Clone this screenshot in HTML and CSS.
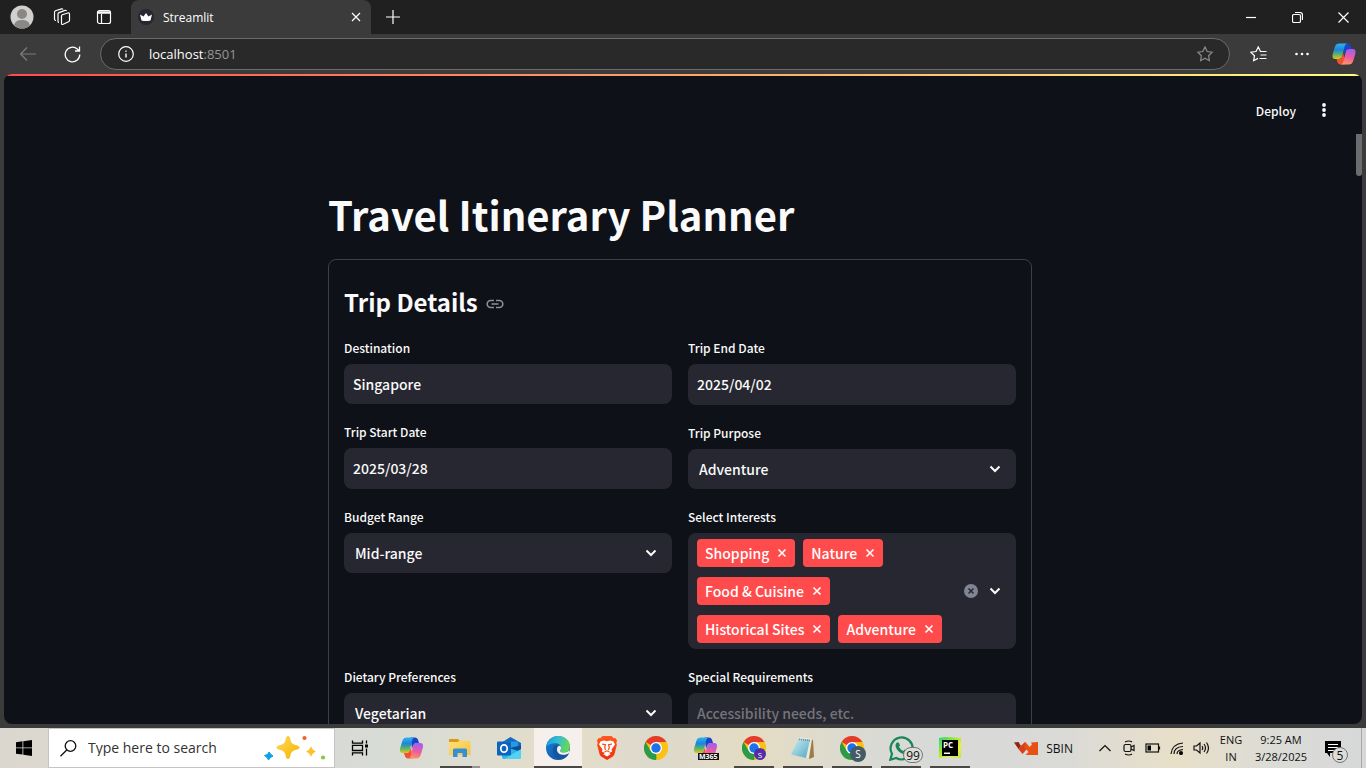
FILE: index.html
```html
<!DOCTYPE html>
<html lang="en">
<head>
<meta charset="utf-8">
<title>Streamlit</title>
<link rel="stylesheet" href="styles.css">
</head>
<body>
<svg class="sprite" aria-hidden="true">
  <defs>
    <linearGradient id="cpA" x1="0" y1="0" x2="0" y2="1"><stop offset="0" stop-color="#2cb5ec"/><stop offset=".4" stop-color="#1e84dc"/><stop offset=".7" stop-color="#55b56c"/><stop offset="1" stop-color="#ecc310"/></linearGradient>
    <linearGradient id="cpB" x1="0.4" y1="0" x2="0.2" y2="1"><stop offset="0" stop-color="#a45df0"/><stop offset=".5" stop-color="#ee5ba0"/><stop offset="1" stop-color="#ff9a5c"/></linearGradient>
    <linearGradient id="edA" x1="0" y1="0" x2="1" y2="0.3"><stop offset="0" stop-color="#1b8fd8"/><stop offset=".5" stop-color="#35bcd5"/><stop offset="1" stop-color="#62d957"/></linearGradient>
    <linearGradient id="edB" x1="0" y1="0" x2="1" y2="1"><stop offset="0" stop-color="#1783d6"/><stop offset="1" stop-color="#0c4a94"/></linearGradient>
    <linearGradient id="fold" x1="0" y1="0" x2="1" y2="1"><stop offset="0" stop-color="#ffe07a"/><stop offset="1" stop-color="#f6c143"/></linearGradient>
    <linearGradient id="star" x1="0" y1="0" x2="1" y2="1"><stop offset="0" stop-color="#ffd95a"/><stop offset="1" stop-color="#f5b400"/></linearGradient>
    <linearGradient id="pad" x1="0" y1="0" x2="1" y2="1"><stop offset="0" stop-color="#d3f0f5"/><stop offset="1" stop-color="#4fa9c3"/></linearGradient>
    <linearGradient id="pyc" x1="0" y1="0" x2="1" y2="1"><stop offset="0" stop-color="#21d789"/><stop offset=".35" stop-color="#8be633"/><stop offset=".7" stop-color="#f5ee35"/><stop offset="1" stop-color="#b9e83b"/></linearGradient>
    <linearGradient id="bra" x1="0" y1="0" x2="0" y2="1"><stop offset="0" stop-color="#ff5a22"/><stop offset="1" stop-color="#f12c0a"/></linearGradient>
    <symbol id="copilot" viewBox="0 0 24 24">
      <path d="M11 1.500h4.500q2.200 0 2.900 2L19.600 7H17q-2.500 0-3.300 2.500L12.500 13z" fill="#1a45c8"/>
      <path d="M13 22.500H8.500q-2.200 0-2.900-2L4.400 17H7q2.500 0 3.300-2.500L11.500 11z" fill="#ee5135"/>
      <path d="M7.500 1.500H15c-1.500.6-2 1.700-2.500 3.400L10.300 14c-.7 2.200-1.800 3-3.800 3H3.300C.8 17 0 15.200.6 12.500L2.800 5C3.600 2.600 5 1.500 7.500 1.500z" fill="url(#cpA)"/>
      <path d="M16.500 22.500H9c1.400-.6 2-1.700 2.500-3.400L13.700 10c.7-2.200 1.800-3 3.800-3h3.200c2.500 0 3.300 1.800 2.700 4.500L21.200 19c-.8 2.400-2.200 3.500-4.700 3.500z" fill="url(#cpB)"/>
    </symbol>
    <symbol id="chrome" viewBox="0 0 24 24">
      <circle cx="12" cy="12" r="12" fill="#fbc116"/>
      <path d="M12 12L1.600 6A12 12 0 0 1 22.400 6z" fill="#e33b2e"/>
      <path d="M12 12L12.500 24A12 12 0 0 1 1.600 6L6.800 15z" fill="#2b9b47"/>
      <path d="M17.200 15L12 24A12 12 0 0 0 22.400 6H12z" fill="#fbc116"/>
      <circle cx="12" cy="12" r="6" fill="#fff"/><circle cx="12" cy="12" r="4.700" fill="#1a73e8"/>
    </symbol>
    <symbol id="chev" viewBox="0 0 12 12"><path d="M1.500 3.500L6 8l4.500-4.500" fill="none" stroke="#fafafa" stroke-width="2"/></symbol>
    <symbol id="cross" viewBox="0 0 10 10"><path d="M1.500 1.500l7 7m0-7l-7 7" fill="none" stroke="#fff" stroke-width="1.600"/></symbol>
  </defs>
</svg>

<header class="tabbar">
  <button class="tool w44" aria-label="Profile"><svg width="24" height="24" viewBox="0 0 24 24"><circle cx="12" cy="12" r="11.500" fill="#d2d0ce"/><circle cx="12" cy="9" r="5" fill="#8b8784"/><path d="M4 20.300c1-4 4-5.300 8-5.300s7 1.300 8 5.300a11.500 11.500 0 0 1-16 0z" fill="#8b8784"/></svg></button>
  <button class="tool w36" aria-label="Workspaces"><svg class="line" width="18" height="18" viewBox="0 0 18 18"><path d="M9.300 6.800L14.800 5q1.700-.4 1.700 1.200v6q0 1.200-1 1.600l-5.300 2.500q-1.700.7-1.700-1V8q0-.9.800-1.200zM6 14.500q-1 0-1-1.300V6q0-1 1-1.400l6-2.200q1-.3 1.500.6M3 12.500q-1.500 0-1.500-1.500V4.500q0-1.300 1-1.700L8.500.900q1-.3 1.500.6"/></svg></button>
  <button class="tool w48" aria-label="Tab actions"><svg class="line" width="16" height="16" viewBox="0 0 16 16"><rect x="1.500" y="1.500" width="13" height="13" rx="2"/><path d="M1.500 3.500h13" stroke-width="2.500"/><path d="M5.500 5v9"/></svg></button>
  <div class="tab">
    <svg width="16" height="16" viewBox="0 0 16 16"><circle cx="8" cy="8" r="8" fill="#262730"/><path d="M2 5.500l3.500 2L8 4l2.500 3.500 3.500-2-1.500 6q-4.500 1-9 0z" fill="#fff"/></svg>
    <span class="tab-name">Streamlit</span>
    <button class="plain" aria-label="Close tab"><svg class="line" width="10" height="10" viewBox="0 0 10 10"><path d="M1 1l8 8m0-8L1 9"/></svg></button>
  </div>
  <button class="tool w44" aria-label="New tab"><svg class="line" width="14" height="14" viewBox="0 0 14 14"><path d="M7 0v14M0 7h14"/></svg></button>
  <div class="window-controls">
    <button class="tool w46" aria-label="Minimize"><svg class="line" width="10" height="10" viewBox="0 0 10 10"><path d="M0 5.500h10"/></svg></button>
    <button class="tool w46" aria-label="Restore"><svg class="line" width="11" height="11" viewBox="0 0 11 11"><rect x=".5" y="2.500" width="8" height="8" rx="1.500"/><path d="M3 .5h5q2.500 0 2.500 2.500v5"/></svg></button>
    <button class="tool w46" aria-label="Close"><svg class="line" width="11" height="11" viewBox="0 0 11 11"><path d="M.5.500l10 10m0-10l-10 10"/></svg></button>
  </div>
</header>

<nav class="toolbar">
  <button class="tool w44 dim" aria-label="Back"><svg class="line" width="16" height="14" viewBox="0 0 16 14"><path d="M16 7H1m6-6.500L.7 7 7 13.500"/></svg></button>
  <button class="tool w44" aria-label="Refresh"><svg class="line" width="17" height="17" viewBox="0 0 17 17"><path d="M15.800 8.500a7.300 7.300 0 1 1-2.300-5.300L15.500 5M15.500.500V5H11" stroke-width="1.300"/></svg></button>
  <form class="address">
    <svg class="line" width="16" height="16" viewBox="0 0 16 16"><circle cx="8" cy="8" r="7.300"/><path d="M8 7.500v4M8 4.500v1.300" stroke-width="1.400"/></svg>
    <a class="url" href="#">localhost<span>:8501</span></a>
    <button type="button" class="plain star" aria-label="Add to favorites"><svg class="line" width="16" height="16" viewBox="0 0 16 16"><path d="M8 .9l2.200 4.600 5 .7-3.600 3.500.8 5L8 12.300l-4.400 2.400.8-5L.8 6.200l5-.7z"/></svg></button>
  </form>
  <button class="tool w44" aria-label="Favorites"><svg class="line" width="17" height="16" viewBox="0 0 17 16"><path d="M10.500 5.500L8.300.900 6 5.500l-5.200.7 3.700 3.500-.9 5 4.400-2.300M10 5.500h6.500M10.500 9h6M9.500 12.500h7"/></svg></button>
  <button class="tool w44" aria-label="More"><svg width="16" height="4" viewBox="0 0 16 4" fill="#fff"><circle cx="2.500" cy="2" r="1.300"/><circle cx="8" cy="2" r="1.300"/><circle cx="13.500" cy="2" r="1.300"/></svg></button>
  <button class="tool w40" aria-label="Copilot"><svg width="24" height="24"><use href="#copilot"/></svg></button>
</nav>

<div class="frame">
  <main class="app">
    <div class="decoration"></div>
    <div class="app-header">
      <button class="plain deploy">Deploy</button>
      <button class="plain" aria-label="Menu"><svg width="16" height="16" viewBox="0 0 16 16" fill="#fafafa"><circle cx="8" cy="3" r="1.900"/><circle cx="8" cy="8" r="1.900"/><circle cx="8" cy="13" r="1.900"/></svg></button>
    </div>
    <div class="scroll-thumb"></div>
    <div class="content">
      <h1>Travel Itinerary Planner</h1>
      <form class="card">
        <h3>Trip Details <a href="#" aria-label="Link to Trip Details"><svg width="18" height="10" viewBox="0 0 18 10" fill="none" stroke="#8d9096" stroke-width="1.600"><path d="M8 1.500H4.700a3.500 3.500 0 0 0 0 7H8M10 1.500h3.300a3.500 3.500 0 0 1 0 7H10M5.500 5h7"/></svg></a></h3>
        <div class="grid">
          <div class="column">
            <div class="field"><label for="dest">Destination</label><input id="dest" type="text" value="Singapore"></div>
            <div class="field"><label for="start">Trip Start Date</label><input id="start" class="date" type="text" value="2025/03/28"></div>
          </div>
          <div class="column">
            <div class="field"><label for="end">Trip End Date</label><input id="end" class="date" type="text" value="2025/04/02"></div>
            <div class="field"><label for="purpose">Trip Purpose</label><div class="select"><select id="purpose"><option>Adventure</option></select><svg width="12" height="12"><use href="#chev"/></svg></div></div>
          </div>
          <div class="field"><label for="budget">Budget Range</label><div class="select"><select id="budget"><option>Mid-range</option></select><svg width="12" height="12"><use href="#chev"/></svg></div></div>
          <div class="field">
            <span class="label" id="interests">Select Interests</span>
            <div class="multi" role="group" aria-labelledby="interests">
              <div class="tags">
                <span class="tag">Shopping<button type="button" class="plain" aria-label="Remove Shopping"><svg width="10" height="10"><use href="#cross"/></svg></button></span>
                <span class="tag">Nature<button type="button" class="plain" aria-label="Remove Nature"><svg width="10" height="10"><use href="#cross"/></svg></button></span>
                <span class="tag">Food &amp; Cuisine<button type="button" class="plain" aria-label="Remove Food"><svg width="10" height="10"><use href="#cross"/></svg></button></span>
                <span class="tag">Historical Sites<button type="button" class="plain" aria-label="Remove Historical Sites"><svg width="10" height="10"><use href="#cross"/></svg></button></span>
                <span class="tag">Adventure<button type="button" class="plain" aria-label="Remove Adventure"><svg width="10" height="10"><use href="#cross"/></svg></button></span>
              </div>
              <button type="button" class="plain" aria-label="Clear all"><svg width="14" height="14" viewBox="0 0 14 14"><circle cx="7" cy="7" r="7" fill="#808495"/><path d="M4.500 4.500l5 5m0-5l-5 5" stroke="#262730" stroke-width="1.500"/></svg></button>
              <button type="button" class="plain" aria-label="Open"><svg width="12" height="12"><use href="#chev"/></svg></button>
            </div>
          </div>
          <div class="field"><label for="diet">Dietary Preferences</label><div class="select"><select id="diet"><option>Vegetarian</option></select><svg width="12" height="12"><use href="#chev"/></svg></div></div>
          <div class="field"><label for="special">Special Requirements</label><input id="special" type="text" placeholder="Accessibility needs, etc."></div>
        </div>
      </form>
    </div>
  </main>
</div>

<footer class="taskbar">
  <button class="start" aria-label="Start"><svg width="16" height="16" viewBox="0 0 16 16"><path d="M0 2.300L6.500 1.300v6.200H0zM7.300 1.200L16 0v7.500H7.300zM0 8.300h6.500v6.300L0 13.700zM7.300 8.300H16V16l-8.700-1.300z"/></svg></button>
  <label class="search">
    <svg width="17" height="17" viewBox="0 0 17 17" fill="none" stroke="#111" stroke-width="1.300"><circle cx="10.500" cy="6" r="5.300"/><path d="M6.700 10L.5 16.300"/></svg>
    <input type="text" placeholder="Type here to search" aria-label="Type here to search">
    <svg width="62" height="26" viewBox="0 0 62 26"><path d="M24 1q2 0 2.500 4 .7 4 5 5 4 .8 4 2.500t-4 2.500q-4.300 1-5 5-.5 4-2.500 4t-2.500-4q-.7-4-5-5-4-.8-4-2.500t4-2.500q4.300-1 5-5 .5-4 2.500-4z" fill="url(#star)"/><path d="M47 11q1.200 4 5 5.500-3.800 1.500-5 5.500-1.200-4-5-5.500 3.800-1.500 5-5.500z" fill="#fcc42c"/><path d="M5 17l1.700 2.300L9 21l-2.500 1.500L4.500 25 3 22.500.5 20.500 3.500 19.500z" fill="#0da2e8" stroke="#0da2e8"/><circle cx="40.500" cy="3" r="2.100" fill="#f1622b"/><circle cx="59" cy="22.500" r="2.100" fill="#8bc53f"/></svg>
  </label>
  <button class="w50" aria-label="Task View"><svg width="18" height="16" viewBox="0 0 18 16" fill="none" stroke="#000" stroke-width="1.300"><path d="M1.500.500v2.700h10V.500M1.500 15.500v-2.700h10v2.700M1.500 5.300h10v5.200h-10zM15.500.500v3M15.500 8.500v7"/><path d="M14 4.500h3v3h-3z" fill="#000" stroke="none"/></svg></button>
  <div class="apps">
    <button aria-label="Copilot"><svg width="25" height="24"><use href="#copilot"/></svg></button>
    <button class="open multiwin" aria-label="File Explorer"><svg width="22" height="20" viewBox="0 0 22 20"><path d="M0 1.500Q0 1 1 1h8l2 2h-1v4H0z" fill="#d89a14"/><path d="M0 4h9l1.500-1.500H20q1.500 0 1.500 1.500v13H0z" fill="url(#fold)"/><path d="M4 19v-7q0-1.500 1.500-1.500h11Q18 10.500 18 12v7h-4.500v-4h-5v4z" fill="#348fd3"/></svg></button>
    <button aria-label="Outlook"><svg width="24" height="24" viewBox="0 0 24 24"><path d="M4 7l9.500-6L24 7v5H4z" fill="#1369bd"/><path d="M7 5.500h14v9H7z" fill="#2499e8"/><path d="M5 11h19v10q0 2-2 2H7q-2 0-2-2z" fill="#28b6eb"/><path d="M24 9.500V16L12 12z" fill="#0c4c91"/><path d="M7 23l17-10v8q0 2-2 2z" fill="#54d2f5"/><rect y="5.500" width="14" height="14" rx="1" fill="#0d64bd"/><ellipse cx="7" cy="12.500" rx="3.200" ry="3.700" fill="none" stroke="#fff" stroke-width="1.700"/></svg></button>
    <button class="active" aria-label="Edge"><svg width="24" height="24" viewBox="0 0 24 24"><circle cx="12" cy="12" r="12" fill="url(#edB)"/><path d="M.1 11C1.200 4.500 6 0 12.200 0 19 0 24 5 24 10.500c0 3.700-2.800 6-6 6-2.600 0-4-.9-4-1.800 0-.7 1.200-1.200 1.200-3 0-2.500-2.500-4.500-6-4.500C5 7.200 1.500 8.500.1 11z" fill="url(#edA)"/><path d="M9.500 9.200c-5 3.500-3 13 5.500 14.400 4-1 6.600-3.400 7.800-5.900.2-.6-.2-.8-.7-.5-4.500 2.300-10.300.8-11.300-3.500-.4-2 .1-3.300 1-4.300z" fill="#14559f"/><path d="M14 14.700c0 .9 1.400 1.800 4 1.800 2.500 0 4.600-1 5.500-3l-.2 3.500c-4 3-11.500 2.500-12.300-3-.3-2 .7-3.500 2-4.200 1.700.4 2.200 1.200 2.200 1.900 0 1.800-1.200 2.300-1.200 3z" fill="#f5f0eb"/></svg></button>
    <button aria-label="Brave"><svg width="20" height="24" viewBox="0 0 20 24"><path d="M5.500 0h9l2.300 2.300 1.700-.3L20 4.500 19.300 7l.5 2-2.300 9q-.4 1.500-1.700 2.400L10 24l-5.800-3.600Q2.900 19.500 2.500 18L.2 9l.5-2L0 4.500 1.500 2l1.700.3z" fill="url(#bra)"/><path d="M3.500 5.500l3.300-1 3.200.7 3.200-.7 3.300 1 1.500 3-3.500 5 .6 2-3 1.500 1.500 1.200L10 20.500l-3.600-2.300L7.900 17l-3-1.500.6-2L2 8.500z" fill="#fff"/><path d="M5 8l3.500.8-.8 2.400.8 2.800M15 8l-3.500.8.8 2.400-.8 2.800M7.500 16l2.500-1.200 2.500 1.200" fill="none" stroke="#f84a1c" stroke-width="1.200"/></svg></button>
    <button aria-label="Chrome"><svg width="24" height="24"><use href="#chrome"/></svg></button>
    <button aria-label="Microsoft 365"><svg width="25" height="24"><use href="#copilot"/></svg><span class="m365">M365</span></button>
    <button class="open" aria-label="Chrome profile"><svg width="24" height="24"><use href="#chrome"/></svg><span class="badge violet">S</span></button>
    <button class="open" aria-label="Notepad"><svg width="24" height="22" viewBox="0 0 24 22"><path d="M18 2l4 1 1 17-5 2z" fill="#9b7b47"/><path d="M9 0l12 2-3 19-8-1z" fill="#eee9dc"/><path d="M8 1l11 1.500L15 21 0 17.500z" fill="url(#pad)"/><path d="M8 2.500l11 1" stroke="#758a90" stroke-width="1.500" stroke-dasharray="1 1"/></svg></button>
    <button class="open" aria-label="Chrome profile 2"><svg width="24" height="24"><use href="#chrome"/></svg><span class="badge slate">S</span></button>
    <button class="open" aria-label="WhatsApp"><svg width="25" height="25" viewBox="0 0 25 25"><path d="M1.300 23.700L3 17.800A11 11 0 1 1 7.200 22z" fill="none" stroke="#198754" stroke-width="2.200"/><path d="M8 6.500h1.800l1.200 3-1 1.300c1 2 2.300 3.200 4.200 4.200l1.600-1.600 3 1.600c0 2-1.700 3.200-3.500 3C10.500 17.300 7 13.200 6.500 9.700 6.500 8 7.200 7 8 6.500z" fill="#198754"/></svg><span class="badge count">99</span></button>
    <button class="open" aria-label="PyCharm"><svg width="22" height="22" viewBox="0 0 22 22"><path d="M0 1l6-1 16 1v20l-12-1-10 1z" fill="url(#pyc)"/><path d="M3 3h16v16H3z"/><path d="M5 15.500h6V17H5z" fill="#fff"/></svg><span class="pc">PC</span></button>
  </div>
  <div class="tray">
    <button class="stock"><svg width="24" height="15" viewBox="0 0 24 15"><path d="M0 1.500L4.500 1 7 5 4.500 8z" fill="#8c2812"/><path d="M4 7.500L11 1l4 4.500L8.500 13z" fill="#d8401c"/><path d="M11 1l4.500 5L18 3.500l-1-2L24 1v13H11.500l3-3-4-4.500z" fill="#e75113"/></svg>SBIN</button>
    <button class="w24" aria-label="Show hidden icons"><svg class="ink" width="12" height="8" viewBox="0 0 12 8"><path d="M.5 7L6 1.500 11.500 7"/></svg></button>
    <button class="w24" aria-label="Meet now"><svg class="ink" width="12" height="16" viewBox="0 0 12 16"><rect x="1" y="4.500" width="7" height="7" rx="1.500"/><path d="M8 7l3-1.500v5L8 9M2 2q4-2 7 0M2 14q4 2 7 0"/></svg></button>
    <button class="w24" aria-label="Battery"><svg class="ink" width="16" height="10" viewBox="0 0 16 10"><rect x="1" y="1" width="12.500" height="8"/><path d="M14.500 3.500v3"/><path d="M2.500 2.500H6v5H2.500z" fill="#000" stroke="none"/></svg></button>
    <button class="w24" aria-label="Network"><svg class="ink" width="14" height="13" viewBox="0 0 14 13"><path d="M1 12Q2 2 13 1M4 12q0-7 9-7.500M7 12q0-4 6-4.500"/><circle cx="11" cy="11" r="1.500" fill="#000"/></svg></button>
    <button class="w24" aria-label="Volume"><svg class="ink" width="17" height="14" viewBox="0 0 17 14"><path d="M1 5h2.500L7 2v10L3.500 9H1zM9 5q1.500 2 0 4M11 3q3 4 0 8M13.500 1.500q4 5.500 0 11"/></svg></button>
    <button class="w36">ENG<br>IN</button>
    <button class="w64">9:25 AM<br>3/28/2025</button>
    <button class="notify" aria-label="Notifications"><svg width="18" height="17" viewBox="0 0 18 17"><path d="M1 1h16v12H6v4l-3-4H1z"/><path d="M4 4.500h10M4 7.500h10M4 10.500h7" stroke="#fff"/></svg><span class="badge five">5</span></button>
    <button class="desktop" aria-label="Show desktop"></button>
  </div>
</footer>
</body>
</html>
```

FILE: styles.css
```css
* { box-sizing: border-box; }

body {
  margin: 0;
  height: 100vh;
  display: flex;
  flex-direction: column;
  overflow: hidden;
  background: #3b3b3b;
  font-family: "Open Sans", "Noto Sans", sans-serif;
  font-size: 12px;
}

button {
  margin: 0;
  padding: 0;
  border: 0;
  background: none;
  color: inherit;
  font: inherit;
  cursor: pointer;
}

svg { display: block; flex: none; }
a { color: inherit; text-decoration: none; }

.sprite { position: absolute; width: 0; height: 0; }
.line { fill: none; stroke: currentColor; stroke-width: 1.200; }
.ink { fill: none; stroke: #111; stroke-width: 1.200; }
.plain { display: flex; align-items: center; justify-content: center; }

/* Browser chrome */
.tool { display: flex; flex: none; align-items: center; justify-content: center; color: #fff; }
.w24 { width: 24px; }
.w36 { width: 36px; }
.w40 { width: 40px; }
.w44 { width: 44px; }
.w46 { width: 46px; }
.w48 { width: 48px; }
.w50 { width: 50px; }
.w64 { width: 64px; }
.dim { color: #7c7c7c; }

.tabbar { display: flex; height: 34px; flex: none; background: #202020; }

.tab {
  display: flex;
  align-items: center;
  width: 240px;
  margin-left: 3px;
  padding: 0 10px 0 7px;
  border-radius: 8px 8px 0 0;
  background: #3b3b3b;
  color: #fff;
}
.tab-name { flex: 1; padding-left: 9px; }
.window-controls { display: flex; margin-left: auto; }

.toolbar { display: flex; flex: none; height: 40px; padding: 0 2px 0 6px; }

.address {
  display: flex;
  flex: 1;
  align-items: center;
  height: 32px;
  margin: 4px 6px;
  padding: 0 16px 0 17px;
  border: 1px solid #6b6b6b;
  border-radius: 16px;
  background: #292929;
  color: #fff;
}
.url { flex: 1; padding-left: 15px; font-size: 13px; }
.url span { color: #969696; }
.star { color: #8a8a8a; }

/* Streamlit app */
.frame { display: flex; flex: 1; min-height: 0; padding: 0 4px 4px; }

.app {
  position: relative;
  flex: 1;
  overflow: hidden;
  padding-right: 6px;
  border-radius: 8px;
  background: #0e1117;
  color: #fafafa;
  font-family: "Noto Sans CJK SC", sans-serif;
  font-size: 14px;
  font-weight: 500;
}

.decoration {
  position: absolute;
  inset: 0 0 auto;
  height: 2px;
  background: linear-gradient(90deg, #ff4b4b, #fffd80);
}

.app-header {
  position: absolute;
  top: 22px;
  right: 30px;
  display: flex;
  gap: 20px;
  height: 28px;
}
.deploy { font-size: 12px; }

.scroll-thumb {
  position: absolute;
  top: 60px;
  right: 0;
  width: 6px;
  height: 42px;
  border-radius: 0 0 3px 3px;
  background: #6b6c70;
}

.content { max-width: 704px; margin: 0 auto; padding-top: 110px; }

h1 { margin: 0; padding-bottom: 15px; font-size: 40px; line-height: 60px; }

.card { padding: 16px 15px; border: 1px solid #3d4045; border-radius: 8px; }

h3 {
  display: flex;
  align-items: center;
  gap: 8px;
  margin: 0;
  padding-bottom: 12px;
  font-size: 24px;
  font-weight: 700;
  line-height: 52px;
}
h3 a { padding-top: 4px; }

.grid { display: grid; grid-template-columns: 1fr 1fr; gap: 20px 16px; }
.column { display: flex; flex-direction: column; gap: 20px; }
.field { min-width: 0; }

label, .label { display: block; padding-bottom: 8px; font-size: 12px; line-height: 16px; }

.field input, .select, .multi {
  width: 100%;
  height: 40px;
  border: 0;
  border-radius: 8px;
  background: #262730;
  color: #fafafa;
  font: inherit;
}
.field input { display: block; padding: 0 9px; }
.field .date { height: 41px; padding-bottom: 2px; }
.field input::placeholder { color: #74757b; opacity: 1; }

.select { display: flex; align-items: center; padding-right: 15px; }
.select svg { margin-left: -12px; pointer-events: none; }
select {
  flex: 1;
  height: 40px;
  padding: 0 11px;
  border: 0;
  appearance: none;
  background: none;
  color: inherit;
  font: inherit;
}

.field .multi { display: flex; align-items: center; gap: 11px; height: auto; padding: 6px 15px 6px 9px; }
.tags { display: flex; flex: 1; flex-wrap: wrap; gap: 10px 8px; }
.tag {
  display: flex;
  align-items: center;
  gap: 8px;
  height: 28px;
  padding: 0 8px;
  border-radius: 4px;
  background: #ff4b4b;
  color: #fff;
  line-height: 20px;
}

/* Taskbar */
.taskbar {
  display: flex;
  flex: none;
  height: 40px;
  background: linear-gradient(90deg, #dcd7ce, #d8dcd6 28%, #e4ddc9 42%, #dcd9cd 48%, #e4dcc3 55%, #d8dad8 66%, #dadad7 78%, #e8dfc8 86%, #dcdcd6 93%, #d6d8d9);
  color: #111;
}
.taskbar button { display: flex; flex: none; align-items: center; justify-content: center; }
.start { width: 48px; }

.search {
  display: flex;
  align-items: center;
  width: 287px;
  padding: 0 8px 0 11px;
  border: 1px solid #c6c4c0;
  background: #fff;
}
.search input {
  flex: 1;
  min-width: 0;
  padding: 0 0 0 11px;
  border: 0;
  outline: 0;
  background: none;
  font: inherit;
  font-size: 14px;
}
.search input::placeholder { color: #333; opacity: 1; }

.apps { display: flex; gap: 1px; padding-left: 2px; }
.apps button { position: relative; width: 48px; }
.apps .active { background: #f5f0eb; box-shadow: inset 0 -2px #4b4745; }
.open::after {
  content: "";
  position: absolute;
  inset: auto 4px 0;
  height: 2px;
  background: #4b4745;
}
.multiwin::after { background: linear-gradient(90deg, #4b4745 80%, #969391 80%); }

.badge {
  position: absolute;
  display: flex;
  align-items: center;
  justify-content: center;
  border-radius: 10px;
  color: #fff;
}
.violet { top: 20px; left: 24px; width: 12px; height: 12px; background: #512da8; font-size: 8px; }
.slate { top: 18px; left: 22px; width: 16px; height: 16px; background: #455a64; font-size: 10px; }
.count { top: 19px; left: 26px; width: 20px; height: 16px; border: 1px solid #777; background: #dcdcd8; color: #111; font-size: 12px; }
.five { top: 19px; left: 19px; width: 16px; height: 16px; border: 1px solid #777; background: #dcdcd8; color: #111; font-size: 12px; }

.m365 {
  position: absolute;
  top: 25px;
  left: 17px;
  padding: 0 1px;
  background: #111;
  color: #fff;
  font-size: 7px;
  font-weight: 700;
  line-height: 7px;
}
.pc {
  position: absolute;
  top: 12px;
  left: 17px;
  color: #fff;
  font-size: 8px;
  font-weight: 700;
  line-height: 10px;
}

.tray { display: flex; margin-left: auto; font-size: 11px; line-height: 17px; }
.tray .stock { gap: 8px; margin-right: 20px; font-size: 12px; }
.tray .notify { position: relative; width: 40px; margin-right: 8px; }
.tray .desktop { width: 5px; border-left: 1px solid #a9a9a6; }
```
